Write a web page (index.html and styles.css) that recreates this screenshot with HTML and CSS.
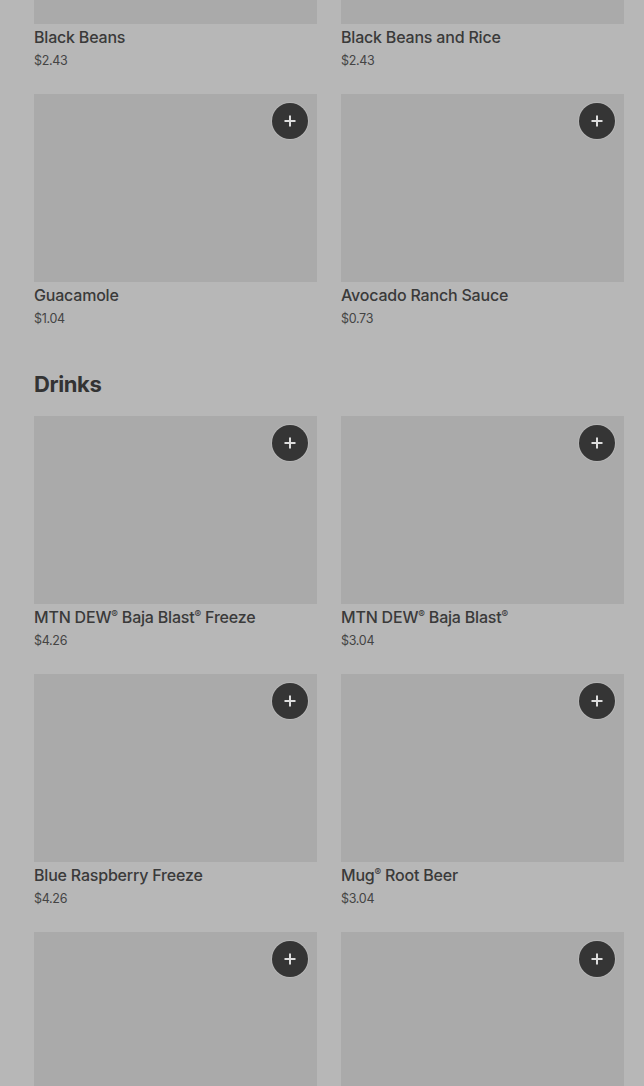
FILE: index.html
```html
<!DOCTYPE html>
<html>
<head>
  <meta charset="UTF-8">
  <title>Menu</title>
  <link rel="stylesheet" href="styles.css">
</head>
<body>
  <div class="menu">
    <section class="menu-section first">
      <div class="item-grid">
        <div class="item">
          <div class="item-image"><button class="add-btn" aria-label="Add"><svg viewBox="0 0 14 14"><path d="M7 1.5v11M1.5 7h11"/></svg></button></div>
          <div class="item-name">Black Beans</div>
          <div class="item-price">$2.43</div>
        </div>
        <div class="item">
          <div class="item-image"><button class="add-btn" aria-label="Add"><svg viewBox="0 0 14 14"><path d="M7 1.5v11M1.5 7h11"/></svg></button></div>
          <div class="item-name">Black Beans and Rice</div>
          <div class="item-price">$2.43</div>
        </div>
        <div class="item">
          <div class="item-image"><button class="add-btn" aria-label="Add"><svg viewBox="0 0 14 14"><path d="M7 1.5v11M1.5 7h11"/></svg></button></div>
          <div class="item-name">Guacamole</div>
          <div class="item-price">$1.04</div>
        </div>
        <div class="item">
          <div class="item-image"><button class="add-btn" aria-label="Add"><svg viewBox="0 0 14 14"><path d="M7 1.5v11M1.5 7h11"/></svg></button></div>
          <div class="item-name">Avocado Ranch Sauce</div>
          <div class="item-price">$0.73</div>
        </div>
      </div>
    </section>

    <section class="menu-section">
      <h2 class="section-title">Drinks</h2>
      <div class="item-grid">
        <div class="item">
          <div class="item-image"><button class="add-btn" aria-label="Add"><svg viewBox="0 0 14 14"><path d="M7 1.5v11M1.5 7h11"/></svg></button></div>
          <div class="item-name">MTN DEW<sup>®</sup> Baja Blast<sup>®</sup> Freeze</div>
          <div class="item-price">$4.26</div>
        </div>
        <div class="item">
          <div class="item-image"><button class="add-btn" aria-label="Add"><svg viewBox="0 0 14 14"><path d="M7 1.5v11M1.5 7h11"/></svg></button></div>
          <div class="item-name">MTN DEW<sup>®</sup> Baja Blast<sup>®</sup></div>
          <div class="item-price">$3.04</div>
        </div>
        <div class="item">
          <div class="item-image"><button class="add-btn" aria-label="Add"><svg viewBox="0 0 14 14"><path d="M7 1.5v11M1.5 7h11"/></svg></button></div>
          <div class="item-name">Blue Raspberry Freeze</div>
          <div class="item-price">$4.26</div>
        </div>
        <div class="item">
          <div class="item-image"><button class="add-btn" aria-label="Add"><svg viewBox="0 0 14 14"><path d="M7 1.5v11M1.5 7h11"/></svg></button></div>
          <div class="item-name">Mug<sup>®</sup> Root Beer</div>
          <div class="item-price">$3.04</div>
        </div>
        <div class="item">
          <div class="item-image"><button class="add-btn" aria-label="Add"><svg viewBox="0 0 14 14"><path d="M7 1.5v11M1.5 7h11"/></svg></button></div>
        </div>
        <div class="item">
          <div class="item-image"><button class="add-btn" aria-label="Add"><svg viewBox="0 0 14 14"><path d="M7 1.5v11M1.5 7h11"/></svg></button></div>
        </div>
      </div>
    </section>
  </div>
</body>
</html>
```

FILE: styles.css
```css
html, body {
  margin: 0;
  height: 100%;
  overflow: hidden;
}
body {
  background-color: #b7b7b7;
  font-family: Inter, "Noto Sans", Arial, sans-serif;
  color: #3a3a3a;
}
.menu {
  padding: 0 20px 0 34px;
}
.menu-section.first {
  margin-top: -164px;
}
.section-title {
  margin: 40px 0 16px;
  font-size: 22px;
  line-height: 32px;
  font-weight: 700;
  letter-spacing: -0.4px;
  color: #333;
}
.item-grid {
  display: grid;
  grid-template-columns: 1fr 1fr;
  column-gap: 24px;
  row-gap: 24px;
}
.item-image {
  position: relative;
  height: 188px;
  background-color: #aaaaaa;
}
.add-btn {
  position: absolute;
  top: 9px;
  right: 9px;
  width: 36px;
  height: 36px;
  padding: 0;
  border: none;
  border-radius: 50%;
  background-color: #353535;
  box-shadow: 0 0 0 1px rgba(200, 200, 200, 0.4);
  display: flex;
  align-items: center;
  justify-content: center;
  cursor: pointer;
}
.add-btn svg {
  width: 14px;
  height: 14px;
  fill: none;
  stroke: #ddd;
  stroke-width: 2;
}
.item-name {
  margin-top: 2px;
  font-size: 16px;
  line-height: 22px;
  font-weight: 500;
  letter-spacing: -0.2px;
}
.item-name sup {
  font-size: 10px;
  vertical-align: 5px;
  line-height: 0;
}
.item-price {
  margin-top: 4px;
  font-size: 12.5px;
  line-height: 18px;
  font-weight: 400;
  letter-spacing: -0.3px;
  color: #444;
}
```
